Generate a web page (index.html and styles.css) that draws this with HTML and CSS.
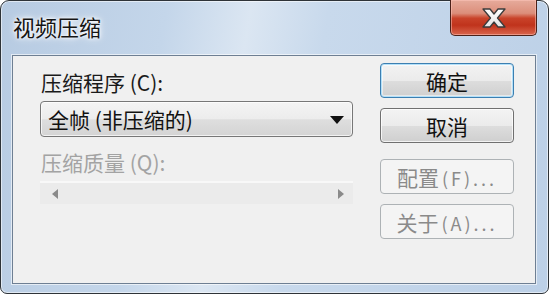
FILE: index.html
```html
<!DOCTYPE html>
<html lang="zh-CN">
<head>
  <meta charset="UTF-8">
  <meta name="viewport" content="width=device-width, initial-scale=1.0">
  <title>视频压缩</title>
  <link rel="stylesheet" href="styles.css">
</head>
<body>

  <div class="window">
    <div class="titlebar">
      <span class="title">视频压缩</span>
      <button class="close" aria-label="关闭">
        <svg width="24" height="20" viewBox="0 0 24 20">
          <defs>
            <linearGradient id="xfill" x1="0" y1="0" x2="0" y2="1">
              <stop offset="0" stop-color="#ffffff"/>
              <stop offset="1" stop-color="#e4e4e4"/>
            </linearGradient>
          </defs>
          <path d="M1 1 H8 L12 6 L16 1 H23 L15.5 10 L23 19 H16 L12 14 L8 19 H1 L8.5 10 Z"
                fill="url(#xfill)" stroke="#3b3b3b" stroke-width="1.3" stroke-linejoin="round"/>
        </svg>
      </button>
    </div>

    <div class="client">
      <div class="main">
        <label class="label">压缩程序 (C):</label>
        <div class="combo">
          <span>全帧 (非压缩的)</span>
          <span class="combo-arrow"></span>
        </div>
        <label class="label disabled">压缩质量 (Q):</label>
        <div class="scrollbar">
          <span class="sb-arrow left"></span>
          <span class="sb-arrow right"></span>
        </div>
      </div>

      <div class="side">
        <button class="button default">确定</button>
        <button class="button">取消</button>
        <button class="button disabled spaced" disabled>配置<span class="latin">(F)...</span></button>
        <button class="button disabled" disabled>关于<span class="latin">(A)...</span></button>
      </div>
    </div>
  </div>

</body>
</html>
```

FILE: styles.css
```css
body {
  margin: 0;
  width: 551px;
  height: 298px;
  background: #ffffff;
  font-family: "Noto Sans CJK SC", "Noto Sans", sans-serif;
  overflow: hidden;
}

.window {
  box-sizing: border-box;
  width: 549px;
  height: 294px;
  border: 1px solid #2e3338;
  border-radius: 9px 9px 7px 7px;
  background: linear-gradient(100deg, #b7cbe2 0%, #c4d6ea 28%, #dbe6f2 42%, #c8d9ec 55%, #bcd0e7 100%);
  box-shadow: inset 0 0 0 1px rgba(255, 255, 255, 0.55);
  display: flex;
  flex-direction: column;
  padding: 0 12px 9px 11px;
}

.titlebar {
  height: 54px;
  display: flex;
  justify-content: space-between;
  align-items: flex-start;
}

.title {
  margin: 12px 0 0 1px;
  font-size: 22px;
  line-height: 26px;
  color: #151515;
  text-shadow: 0 0 8px #ffffff, 0 0 4px #ffffff, 0 0 2px #ffffff;
}

.close {
  width: 87px;
  height: 36px;
  margin: -1px -1px 0 0;
  padding: 0;
  border: 1px solid #4b2119;
  border-top: none;
  border-radius: 0 0 5px 5px;
  background: linear-gradient(#e6ab9c 0%, #dc8e7a 38%, #c9432a 52%, #c0331c 72%, #d9664d 100%);
  box-shadow: inset 0 0 0 1px rgba(255, 200, 190, 0.5);
  display: flex;
  align-items: center;
  justify-content: center;
}

.close svg {
  display: block;
}

.client {
  flex: 1;
  display: flex;
  gap: 27px;
  padding: 7px 21px 0 27px;
  border: 1px solid #6e7f93;
  background: #f0f0f0;
  box-shadow: 0 0 0 1px rgba(255, 255, 255, 0.6);
}

.main {
  width: 313px;
  display: flex;
  flex-direction: column;
  padding-top: 6px;
}

.label {
  font-size: 21px;
  line-height: 26px;
  color: #1a1a1a;
  margin-left: 1px;
}

.label.disabled {
  color: #a3a3a3;
  margin-top: 12px;
}

.combo {
  box-sizing: border-box;
  height: 36px;
  margin-top: 6px;
  border: 1px solid #777777;
  border-radius: 4px;
  background: linear-gradient(#f4f4f4 0%, #ececec 50%, #dedede 52%, #d4d4d4 100%);
  box-shadow: inset 0 0 0 1px rgba(255, 255, 255, 0.7);
  display: flex;
  align-items: center;
  justify-content: space-between;
  padding: 0 8px 0 7px;
  font-size: 21px;
  color: #111111;
}

.combo-arrow {
  width: 0;
  height: 0;
  border-left: 7px solid transparent;
  border-right: 7px solid transparent;
  border-top: 8px solid #111111;
  margin-top: 2px;
}

.scrollbar {
  box-sizing: border-box;
  height: 23px;
  margin-top: 6px;
  background: #ebebeb;
  border-top: 2px solid #f8f8f8;
  display: flex;
  align-items: center;
  justify-content: space-between;
  padding: 0 9px 0 12px;
}

.sb-arrow {
  width: 0;
  height: 0;
  border-top: 5px solid transparent;
  border-bottom: 5px solid transparent;
}

.sb-arrow.left {
  border-right: 6px solid #8a8a8a;
}

.sb-arrow.right {
  border-left: 6px solid #8a8a8a;
}

.side {
  width: 134px;
  display: flex;
  flex-direction: column;
  gap: 10px;
}

.button {
  box-sizing: border-box;
  height: 35px;
  padding: 0;
  border: 1px solid #707070;
  border-radius: 4px;
  background: linear-gradient(#f3f3f3 0%, #ebebeb 50%, #dddddd 52%, #cfcfcf 100%);
  box-shadow: inset 0 0 0 1px rgba(255, 255, 255, 0.75);
  font-family: "Noto Sans CJK SC", "Noto Sans", sans-serif;
  font-size: 21px;
  color: #111111;
}

.button.default {
  border-color: #3c7fb1;
  box-shadow: inset 0 0 0 1px #b3e0f9, inset 0 0 0 2px rgba(255, 255, 255, 0.5);
}

.button.disabled {
  border-color: #adb2b5;
  background: #f4f4f4;
  box-shadow: none;
  color: #8a8a8a;
}

.button.spaced {
  margin-top: 6px;
}

.latin {
  margin-left: 3px;
  font-size: 18px;
  letter-spacing: 3px;
}
```
